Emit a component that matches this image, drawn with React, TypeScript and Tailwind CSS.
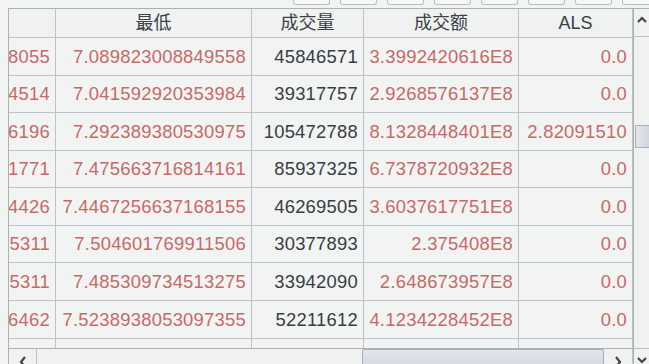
import React from "react";

const rows: { a: string; b: string; c: string; d: string; e: string; h: string }[] = [
  { a: "8055", b: "7.089823008849558", c: "45846571", d: "3.3992420616E8", e: "0.0", h: "h-[38px]" },
  { a: "4514", b: "7.041592920353984", c: "39317757", d: "2.9268576137E8", e: "0.0", h: "h-[37px]" },
  { a: "6196", b: "7.292389380530975", c: "105472788", d: "8.1328448401E8", e: "2.82091510", h: "h-[38px]" },
  { a: "1771", b: "7.475663716814161", c: "85937325", d: "6.7378720932E8", e: "0.0", h: "h-[37px]" },
  { a: "4426", b: "7.4467256637168155", c: "46269505", d: "3.6037617751E8", e: "0.0", h: "h-[38px]" },
  { a: "5311", b: "7.504601769911506", c: "30377893", d: "2.375408E8", e: "0.0", h: "h-[37px]" },
  { a: "5311", b: "7.485309734513275", c: "33942090", d: "2.648673957E8", e: "0.0", h: "h-[38px]" },
  { a: "6462", b: "7.5238938053097355", c: "52211612", d: "4.1234228452E8", e: "0.0", h: "h-[38px]" },
];

const font = { fontFamily: '"Liberation Sans", Arial, "Noto Sans CJK SC", sans-serif' };

function Cell({ w, children, dark }: { w: string; children?: React.ReactNode; dark?: boolean }) {
  return (
    <div
      className={`${w} h-full shrink-0 border-r border-[#bcc3c7] flex items-center justify-end overflow-hidden pr-[5px] text-[18.4px] tracking-[0.25px] whitespace-nowrap ${
        dark ? "text-[#363e44]" : "text-[#c66a66]"
      }`}
    >
      <span className="shrink-0">{children}</span>
    </div>
  );
}

function HCell({ w, children }: { w: string; children?: React.ReactNode }) {
  return (
    <div className={`${w} h-full shrink-0 border-r border-[#bcc3c7] flex items-center justify-center pt-[1px] text-[18px] text-[#3a4044]`}>
      {children}
    </div>
  );
}

export default function App() {
  return (
    <div className="w-[649px] h-[364px] overflow-hidden bg-[#f2f3f3] flex flex-col" style={font}>
      {/* toolbar remnants */}
      <div className="h-[8px] shrink-0 flex items-start pl-[293px] gap-[10px] overflow-hidden">
        {Array.from({ length: 8 }).map((_, i) => (
          <div key={i} className="w-[37px] h-[5px] shrink-0 border border-t-0 border-[#b9bfc3] rounded-b-[3px] bg-[#f7f8f8]" />
        ))}
      </div>
      <div className="flex-1 flex pl-[8px] min-h-0">
        {/* table + horizontal scrollbar */}
        <div className="w-[625px] shrink-0 flex flex-col border-l border-t border-[#aab2b6]">
          <div className="flex h-[29px] shrink-0 border-b border-[#bcc3c7] bg-[#f0f1f1]">
            <HCell w="w-[47px]" />
            <HCell w="w-[196px]">最低</HCell>
            <HCell w="w-[112px]">成交量</HCell>
            <HCell w="w-[155px]">成交额</HCell>
            <HCell w="w-[114px]">ALS</HCell>
          </div>
          {rows.map((r, i) => (
            <div key={i} className={`flex ${r.h} shrink-0 border-b border-[#bcc3c7]`}>
              <Cell w="w-[47px]">{r.a}</Cell>
              <Cell w="w-[196px]">{r.b}</Cell>
              <Cell w="w-[112px]" dark>{r.c}</Cell>
              <Cell w="w-[155px]">{r.d}</Cell>
              <Cell w="w-[114px]">{r.e}</Cell>
            </div>
          ))}
          <div className="flex h-[9px] shrink-0">
            <Cell w="w-[47px]" />
            <Cell w="w-[196px]" />
            <Cell w="w-[112px]" />
            <Cell w="w-[155px]" />
            <Cell w="w-[114px]" />
          </div>
          {/* horizontal scrollbar */}
          <div className="flex-1 flex border-t border-[#aab2b6] bg-[#f0f1f1] border-r border-r-[#bcc3c7]">
            <div className="w-[28px] shrink-0 border-r border-[#bcc3c7] flex justify-center pt-[7px]">
              <svg width="10" height="14" viewBox="0 0 10 14">
                <polyline points="7,1 3,6 7,11" fill="none" stroke="#444" strokeWidth="2.2" />
              </svg>
            </div>
            <div className="w-[325px] shrink-0" />
            <div className="w-[242px] shrink-0 border border-b-0 border-[#a6aeb8] rounded-t-[2px] bg-gradient-to-b from-[#e2e5ea] to-[#d2d6de]" />
            <div className="flex-1 flex justify-center pt-[7px]">
              <svg width="10" height="14" viewBox="0 0 10 14">
                <polyline points="3,1 7,6 3,11" fill="none" stroke="#444" strokeWidth="2.2" />
              </svg>
            </div>
          </div>
        </div>
        {/* vertical scrollbar */}
        <div className="flex-1 flex flex-col border-l border-t border-[#aab2b6] bg-[#f0f1f1]">
          <div className="h-[28px] shrink-0 border-b border-[#bcc3c7] flex justify-center pt-[6px]">
            <svg width="12" height="10" viewBox="0 0 12 10">
              <polyline points="2,7 6,3 10,7" fill="none" stroke="#444" strokeWidth="2.2" />
            </svg>
          </div>
          <div className="h-[88px] shrink-0" />
          <div className="h-[23px] shrink-0 ml-[1px] border border-r-0 border-[#a6aeb8] bg-gradient-to-r from-[#e2e5ea] to-[#d2d6de]" />
          <div className="flex-1" />
          <div className="h-[16px] shrink-0 border-t border-[#bcc3c7] flex justify-center pt-[7px]">
            <svg width="12" height="10" viewBox="0 0 12 10">
              <polyline points="2,2 6,6 10,2" fill="none" stroke="#444" strokeWidth="2.2" />
            </svg>
          </div>
        </div>
      </div>
    </div>
  );
}
